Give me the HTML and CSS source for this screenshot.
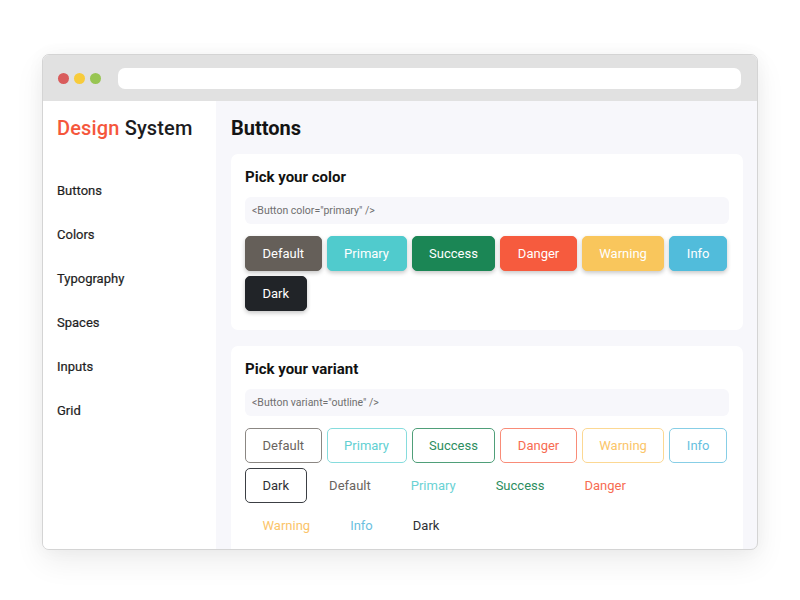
FILE: index.html
```html
<!DOCTYPE html>
<html lang="en">
<head>
<meta charset="utf-8">
<title>Design System</title>
<link rel="stylesheet" href="styles.css">
</head>
<body>
<div class="stage">
  <div class="window">
    <div class="topbar">
      <span class="dot red"></span>
      <span class="dot yellow"></span>
      <span class="dot green"></span>
      <div class="url"></div>
    </div>
    <div class="app">
      <aside class="sidebar">
        <div class="brand"><span class="brand-accent">Design</span> System</div>
        <nav class="nav">
          <a class="nav-item">Buttons</a>
          <a class="nav-item">Colors</a>
          <a class="nav-item">Typography</a>
          <a class="nav-item">Spaces</a>
          <a class="nav-item">Inputs</a>
          <a class="nav-item">Grid</a>
        </nav>
      </aside>
      <main class="main">
        <h1 class="page-title">Buttons</h1>
        <section class="card">
          <h2 class="card-title">Pick your color</h2>
          <div class="code">&lt;Button color="primary" /&gt;</div>
          <div class="btn-row">
            <button class="btn solid default">Default</button>
            <button class="btn solid primary">Primary</button>
            <button class="btn solid success">Success</button>
            <button class="btn solid danger">Danger</button>
            <button class="btn solid warning">Warning</button>
            <button class="btn solid info">Info</button>
            <button class="btn solid dark">Dark</button>
          </div>
        </section>
        <section class="card">
          <h2 class="card-title">Pick your variant</h2>
          <div class="code">&lt;Button variant="outline" /&gt;</div>
          <div class="btn-row">
            <button class="btn outline default">Default</button>
            <button class="btn outline primary">Primary</button>
            <button class="btn outline success">Success</button>
            <button class="btn outline danger">Danger</button>
            <button class="btn outline warning">Warning</button>
            <button class="btn outline info">Info</button>
            <button class="btn outline dark">Dark</button>
            <button class="btn text default">Default</button>
            <button class="btn text primary">Primary</button>
            <button class="btn text success">Success</button>
            <button class="btn text danger">Danger</button>
            <button class="btn text warning">Warning</button>
            <button class="btn text info">Info</button>
            <button class="btn text dark">Dark</button>
          </div>
        </section>
      </main>
    </div>
  </div>
</div>
</body>
</html>
```
FILE: styles.css
```css
* { box-sizing: border-box; }
html, body { margin: 0; padding: 0; background: #ffffff; }
body {
  font-family: Roboto, "Liberation Sans", Arial, sans-serif;
  color: #1f1f1f;
  width: 800px;
  height: 600px;
  overflow: hidden;
}
.stage {
  padding: 54px 42px 0 42px;
}
.window {
  width: 716px;
  height: 496px;
  border: 1px solid #d4d4d4;
  border-radius: 7px;
  overflow: hidden;
  background: #f7f7fb;
  box-shadow: 0 12px 30px rgba(0, 0, 0, 0.07), 0 0 18px rgba(0, 0, 0, 0.04);
  display: flex;
  flex-direction: column;
}
.topbar {
  height: 46px;
  flex: none;
  background: #e1e1e1;
  display: flex;
  align-items: center;
  padding: 0 16px 0 15px;
}
.dot {
  width: 11px;
  height: 11px;
  border-radius: 50%;
  margin-right: 5px;
  flex: none;
}
.dot.red { background: #d95c5c; }
.dot.yellow { background: #f7cb3b; }
.dot.green { background: #98c552; }
.url {
  flex: 1;
  height: 21px;
  margin-left: 12px;
  background: #ffffff;
  border-radius: 7px;
}
.app {
  flex: 1;
  display: flex;
  min-height: 0;
}
.sidebar {
  width: 173px;
  flex: none;
  background: #ffffff;
  padding: 15px 14px 0 14px;
}
.brand {
  font-size: 20px;
  line-height: 24px;
  font-weight: 500;
  color: #1c1c1f;
  letter-spacing: 0.15px;
}
.brand-accent { color: #f5573c; }
.nav {
  display: flex;
  flex-direction: column;
  margin-top: 29px;
}
.nav-item {
  font-size: 13px;
  line-height: 44px;
  font-weight: 400;
  color: #1e1e1e;
  -webkit-text-stroke: 0.2px #1e1e1e;
}
.main {
  flex: 1;
  padding: 15px 14px 0 15px;
  min-width: 0;
}
.page-title {
  margin: 0 0 14px 0;
  font-size: 20px;
  line-height: 24px;
  font-weight: 700;
  color: #141414;
}
.card {
  background: #ffffff;
  border-radius: 7px;
  padding: 13px 14px 19px 14px;
  margin-bottom: 16px;
}
.card-title {
  margin: 0;
  font-size: 15px;
  line-height: 20px;
  font-weight: 700;
  color: #121212;
}
.code {
  margin-top: 10px;
  height: 27px;
  line-height: 27px;
  background: #f7f7fb;
  border-radius: 6px;
  padding: 0 7px;
  font-size: 10.5px;
  color: #6f6f6f;
}
.btn-row {
  margin-top: 12px;
  display: flex;
  flex-wrap: wrap;
  gap: 5px 5px;
}
.btn {
  font-family: inherit;
  font-size: 13px;
  font-weight: 400;
  height: 35px;
  padding: 0 16.5px;
  border-radius: 5px;
  border: 1px solid transparent;
  background: transparent;
  cursor: pointer;
}
.btn.solid {
  color: #ffffff;
  box-shadow: 0 2px 4px rgba(0, 0, 0, 0.22);
}
.btn.solid.default { background: #655f59; border-color: #655f59; }
.btn.solid.primary { background: #50cbcd; border-color: #50cbcd; }
.btn.solid.success { background: #1b8655; border-color: #1b8655; }
.btn.solid.danger { background: #f65b3e; border-color: #f65b3e; }
.btn.solid.warning { background: #f9c65c; border-color: #f9c65c; }
.btn.solid.info { background: #51bcdb; border-color: #51bcdb; }
.btn.solid.dark { background: #212428; border-color: #212428; }

.btn.outline { background: #ffffff; }
.btn.outline.default { border-color: #8b8783; color: #6a645e; }
.btn.outline.primary { border-color: #86dcdd; color: #62d0d2; }
.btn.outline.success { border-color: #4f9f79; color: #2c8d60; }
.btn.outline.danger { border-color: #f98c78; color: #f76c52; }
.btn.outline.warning { border-color: #fcd893; color: #fbc569; }
.btn.outline.info { border-color: #87cee6; color: #66bfe0; }
.btn.outline.dark { border-color: #3c3f44; color: #2e3035; }

.btn.text.default { color: #6a645e; }
.btn.text.primary { color: #6ad2d4; }
.btn.text.success { color: #2c8d60; }
.btn.text.danger { color: #f76c52; }
.btn.text.warning { color: #fbc469; }
.btn.text.info { color: #6bbfe0; }
.btn.text.dark { color: #2e3035; }
```
